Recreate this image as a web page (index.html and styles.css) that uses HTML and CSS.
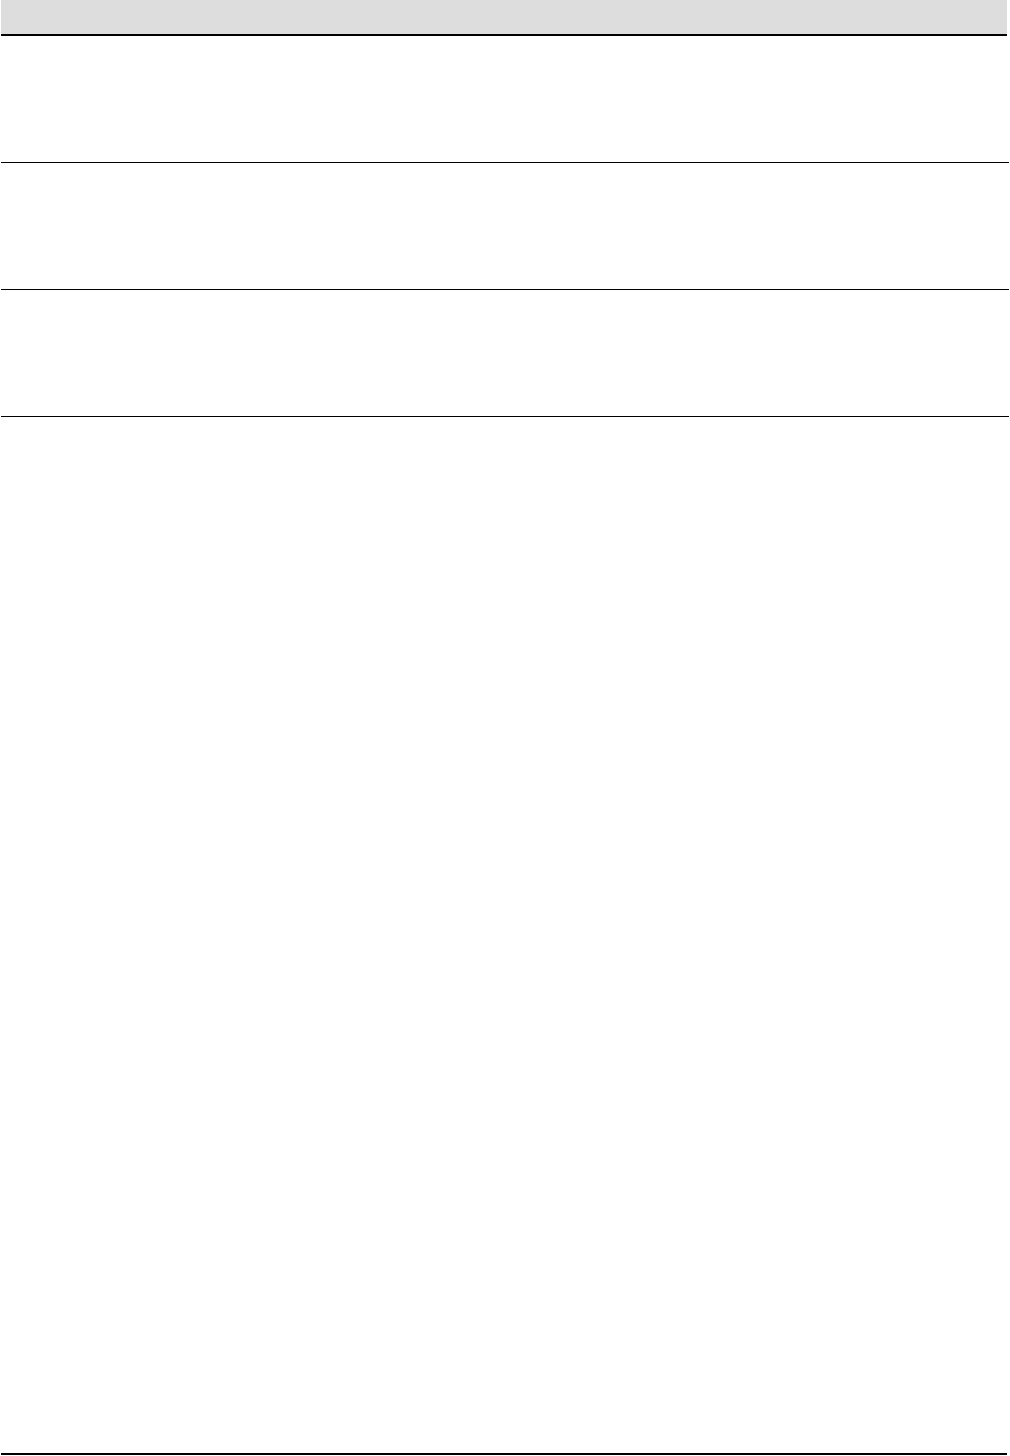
FILE: index.html
```html
<!DOCTYPE html>
<html lang="en">
<head>
<meta charset="utf-8">
<title>Table</title>
<link rel="stylesheet" href="styles.css">
</head>
<body>
<div class="sheet">
  <div class="head"></div>
  <div class="row"></div>
  <div class="row"></div>
  <div class="row"></div>
  <div class="filler"></div>
  <div class="foot"></div>
</div>
</body>
</html>
```

FILE: styles.css
```css
html, body {
  margin: 0;
  padding: 0;
  background: #ffffff;
  font-family: "Liberation Sans", Arial, sans-serif;
}
.sheet {
  display: flex;
  flex-direction: column;
  height: 1456px;
  padding-left: 1px;
  box-sizing: border-box;
}
.head {
  width: 1006px;
  height: 34px;
  background: #dddddd;
  border-bottom: 2px solid #000000;
  flex: none;
}
.row {
  width: 1008px;
  height: 126px;
  border-bottom: 1px solid #000000;
  flex: none;
}
.filler {
  flex: 1;
}
.foot {
  width: 1006px;
  height: 2px;
  background: #000000;
  margin-bottom: 1px;
  flex: none;
}
```
